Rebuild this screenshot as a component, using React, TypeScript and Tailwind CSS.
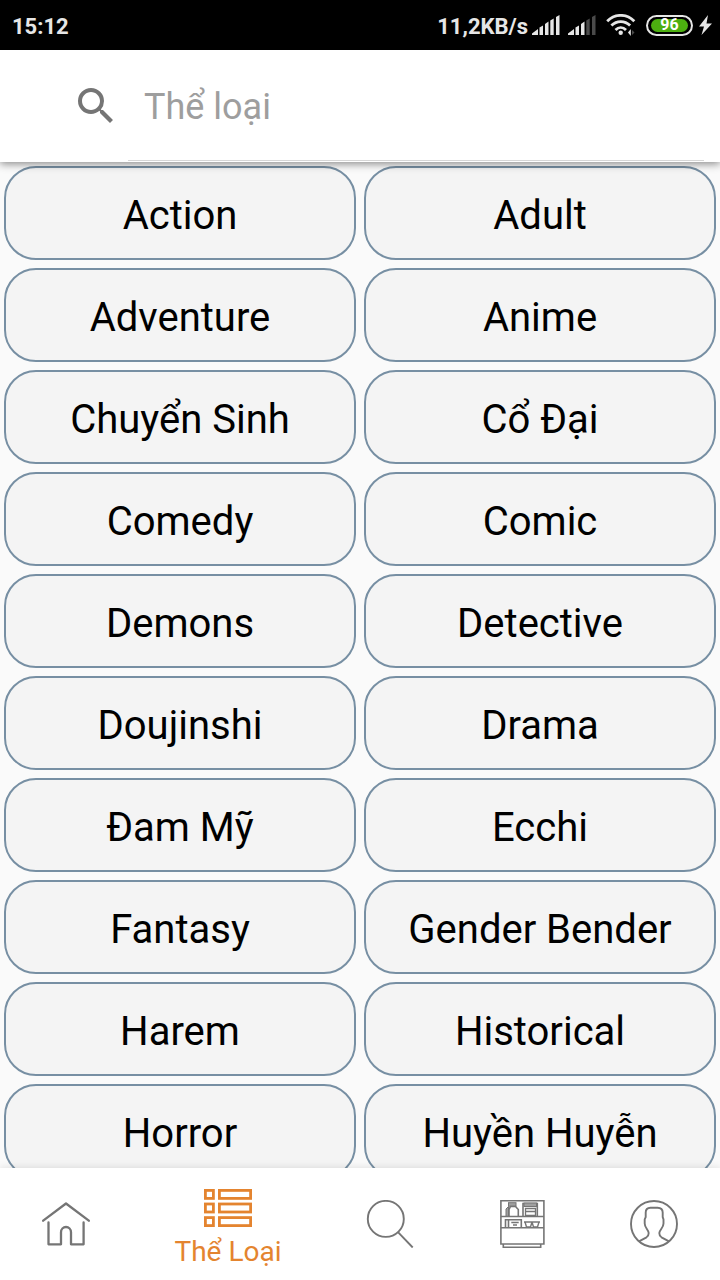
import React, { type ReactNode } from "react";

const genres = [
  "Action",
  "Adult",
  "Adventure",
  "Anime",
  "Chuyển Sinh",
  "Cổ Đại",
  "Comedy",
  "Comic",
  "Demons",
  "Detective",
  "Doujinshi",
  "Drama",
  "Đam Mỹ",
  "Ecchi",
  "Fantasy",
  "Gender Bender",
  "Harem",
  "Historical",
  "Horror",
  "Huyền Huyễn",
];

function Signal({ level }: { level: number }) {
  const bars = [
    "M0 20V18.5L6 14V20Z",
    "M7.500 20V12.5L11 10.5V20Z",
    "M13 20V9L16.5 6.5V20Z",
    "M18.3 20V5.5L21.7 3.5V20Z",
    "M24 20V2L27.5 0V20Z",
  ];
  return (
    <svg viewBox="0 0 28 20" className="h-5 w-7" aria-hidden="true">
      {bars.map((d, i) => (
        <path key={d} d={d} fill={i < level ? "#e6e6e6" : "#4a4a4a"} />
      ))}
    </svg>
  );
}

function Wifi() {
  return (
    <svg viewBox="0 0 30 22" className="h-[22px] w-[30px]" fill="none" stroke="#e6e6e6" strokeWidth="2.8" aria-hidden="true">
      <path d="M1.200 7.200C9 -.6 20.500 -.6 28.300 7.200" />
      <path d="M5.400 11.600C10.800 6.200 18.700 6.200 24.100 11.600" />
      <path d="M9.500 15.900C12.600 12.800 16.900 12.800 20 15.900" />
      <circle cx="14.700" cy="18.800" r="2.200" fill="#e6e6e6" stroke="none" />
      <path d="M22 18.500L24.800 15V22Z" fill="#e6e6e6" stroke="none" />
      <path d="M26 16V21L28.500 18.500Z" fill="#4a4a4a" stroke="none" />
    </svg>
  );
}

function Battery() {
  return (
    <span className="flex h-[21px] w-[47px] rounded-full border-2 border-[#e6e6e6] px-[3px] py-0.5">
      <span className="flex flex-1 items-center justify-center rounded-full bg-[#4caf10] text-base leading-none font-bold text-white">
        96
      </span>
    </span>
  );
}

function Bolt() {
  return (
    <svg viewBox="0 0 13 20" className="h-5 w-[13px]" fill="#e6e6e6" aria-hidden="true">
      <path d="M9 0L0 11.500H5L2.500 20L13 8.500H7.500Z" />
    </svg>
  );
}

function StatusBar() {
  return (
    <div className="flex h-[50px] shrink-0 items-center justify-between bg-black pr-2 pl-3 text-[#e6e6e6]">
      <span className="pt-0.5 text-[22px] font-bold">15:12</span>
      <div className="flex items-center">
        <span className="mr-1 pt-0.5 text-[22px] font-bold">11,2KB/s</span>
        <Signal level={5} />
        <span className="ml-2 flex">
          <Signal level={3} />
        </span>
        <span className="mx-2.5 flex">
          <Wifi />
        </span>
        <Battery />
        <span className="ml-1.5 flex">
          <Bolt />
        </span>
      </div>
    </div>
  );
}

function NavIcon({ children, strokeWidth = 2.3 }: { children: ReactNode; strokeWidth?: number }) {
  return (
    <svg
      viewBox="0 0 48 48"
      className="size-12 shrink-0"
      fill="none"
      stroke="currentColor"
      strokeWidth={strokeWidth}
      aria-hidden="true"
    >
      {children}
    </svg>
  );
}

function HomeIcon() {
  return (
    <NavIcon>
      <g strokeLinecap="round" strokeLinejoin="round">
        <path d="M1.200 20.700L24 3.500L46.800 20.700" />
        <path d="M6.500 22.500V44.300H19V32.300A5 5.300 0 0 1 29 32.300V44.300H41.600V22.500" />
      </g>
    </NavIcon>
  );
}

function ListIcon() {
  return (
    <NavIcon strokeWidth={2.8}>
      {[6.4, 20, 33.6].map((y) => (
        <g key={y}>
          <rect x="1.400" y={y} width="8" height="8" />
          <rect x="15.400" y={y} width="31.200" height="8" />
        </g>
      ))}
    </NavIcon>
  );
}

function SearchIcon() {
  return (
    <NavIcon strokeWidth={1.9}>
      <circle cx="19.800" cy="18.900" r="18" />
      <path d="M32 32.200L46.700 47.500" />
    </NavIcon>
  );
}

function ShelfIcon() {
  return (
    <NavIcon strokeWidth={1.6}>
      <path d="M2.900 .8H45.900V44H2.900Z" />
      <path d="M2.900 16.500H45.900M2.900 27.700H45.900" />
      <path d="M5.300 44V47.200H42.700V44" />
      <rect x="10.500" y="2.700" width="7.500" height="3.500" fill="#a0a0a0" strokeWidth="1" />
      <path d="M11 16.200V9.500L12.500 6.500H17.500L20.300 9.500V16.200" />
      <path d="M8 16.200V9L10.500 6.500V16.200Z" fill="#a0a0a0" strokeWidth="1" />
      <path d="M25 16.200V3.500H39.300V16.200" />
      <rect x="26" y="3" width="12.500" height="3.500" fill="#a0a0a0" strokeWidth="1" />
      <path d="M27.500 8.500H37.500V11.500H27.500ZM27.500 11.500H37.500V15.500H27.500Z" strokeWidth="1.300" />
      <path d="M7.500 27.700V19.700H23.300V27.700M10.500 19.700V27.700" />
      <path d="M13.300 22.500H20.700M15 25H19" />
      <path d="M26 22H42M27 22L28.500 27H32.500L34 22M34 22L35.500 27H39.500L41 22" strokeWidth="1.400" />
    </NavIcon>
  );
}

function ProfileIcon() {
  return (
    <NavIcon strokeWidth={1.9}>
      <circle cx="24" cy="24" r="23" />
      <path d="M9 41.300L16.500 37.300Q18.700 36 18.700 33C18.300 29.500 14.700 28 14.700 23.500V19.500L15.700 17V12.500Q15.700 8 20.500 7.700H27.500Q32.700 8 32.700 12.500V17L33.500 19.500V23.500C33.500 28 29.700 29.500 29.300 33Q29.300 36 31.500 37.300L39 41.300" />
    </NavIcon>
  );
}

const tabs = [
  { name: "Trang chủ", icon: <HomeIcon /> },
  { name: "Thể Loại", icon: <ListIcon />, active: true },
  { name: "Tìm kiếm", icon: <SearchIcon /> },
  { name: "Tủ truyện", icon: <ShelfIcon /> },
  { name: "Tài khoản", icon: <ProfileIcon /> },
];

export default function App() {
  return (
    <div className="flex h-screen flex-col overflow-hidden bg-[#fafafa] font-['Roboto',sans-serif]">
      <StatusBar />
      <header className="z-10 flex h-28 shrink-0 bg-white pr-4 pb-px pl-[72px] shadow-[0_2px_8px_rgba(0,0,0,0.45)]">
        <label htmlFor="genre-search" className="flex items-center text-[#757575]" aria-label="Thể loại">
          <svg viewBox="0 0 24 24" className="size-12" fill="currentColor" aria-hidden="true">
            <path d="M15.500 14h-.79l-.28-.27A6.471 6.471 0 0 0 16 9.500 6.500 6.500 0 1 0 9.500 16c1.610 0 3.090-.59 4.230-1.570l.27.28v.79l5 4.990L20.490 19l-4.990-5zm-6 0C7.010 14 5 11.990 5 9.500S7.010 5 9.500 5 14 7.010 14 9.500 11.990 14 9.500 14z" />
          </svg>
        </label>
        <input
          id="genre-search"
          type="search"
          placeholder="Thể loại"
          className="ml-2 min-w-0 flex-1 border-b border-[#d6d6d6] px-4 pt-1 text-4xl text-black outline-none placeholder:text-[#9e9e9e]"
        />
      </header>
      <main className="min-h-0 flex-1 overflow-hidden">
        <div className="grid grid-cols-2 gap-2 p-1">
          {genres.map((genre) => (
            <button
              key={genre}
              type="button"
              className="h-[94px] rounded-[32px] border-2 border-[#778fa3] bg-[#f4f4f4] pt-1.5 text-[40px] text-black"
            >
              {genre}
            </button>
          ))}
        </div>
      </main>
      <nav className="z-10 grid h-28 shrink-0 grid-cols-[11fr_16fr_11fr_11fr_11fr] bg-white shadow-[0_0_8px_rgba(0,0,0,0.12)]">
        {tabs.map(({ name, icon, active }) => (
          <button
            key={name}
            type="button"
            aria-label={name}
            className={
              active
                ? "flex flex-col items-center pt-4 text-[#e4842f]"
                : "flex flex-col items-center justify-center text-[#757575]"
            }
          >
            {icon}
            {active && <span className="pt-0.5 text-[28px] leading-9">{name}</span>}
          </button>
        ))}
      </nav>
    </div>
  );
}
